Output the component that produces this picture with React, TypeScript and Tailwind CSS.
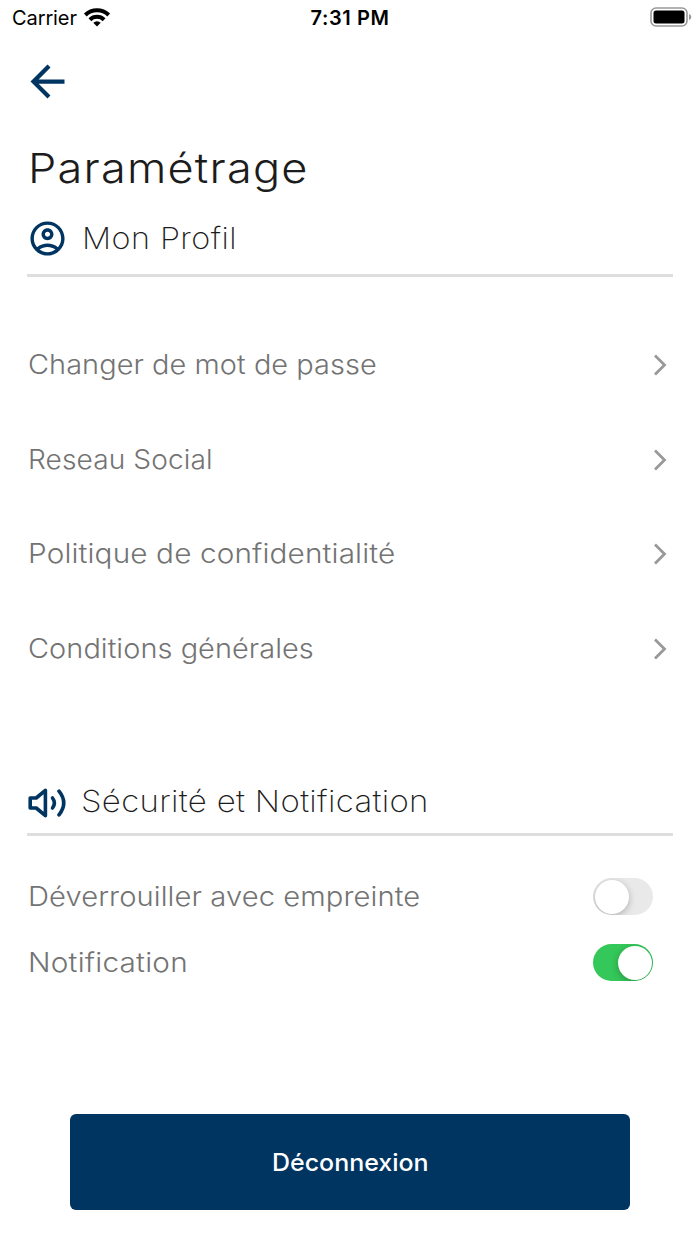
import { useState } from 'react';
import { MdArrowBack, MdOutlineAccountCircle } from 'react-icons/md';

const links = [
  { label: 'Changer de mot de passe', stretch: 'scale-x-[1.07] tracking-[0.06px]' },
  { label: 'Reseau Social', stretch: 'scale-x-[1.04] tracking-[0.1px]' },
  { label: 'Politique de confidentialité', stretch: 'scale-x-[1.1] tracking-[0.13px]' },
  { label: 'Conditions générales', stretch: 'scale-x-[1.07] tracking-[0.07px]' },
];

function StatusBar() {
  return (
    <header className="grid h-9 grid-cols-[1fr_auto_1fr] items-center px-2 text-black">
      <div className="flex items-center gap-[6px] pl-1">
        <span className="text-[20px] leading-9 tracking-[-0.1px]">Carrier</span>
        <svg className="-mt-0.5 h-[20px] w-[28px]" viewBox="0 0 28 20" fill="none" stroke="currentColor" strokeWidth="4">
          <path d="M2.300 8a16.800 16.800 0 0 1 23.400 0" />
          <path d="M6.900 12.700a10.200 10.200 0 0 1 14.200 0" />
          <path d="M14 19.500l-3.700-3.700a5.300 5.300 0 0 1 7.400 0z" fill="currentColor" stroke="none" />
        </svg>
      </div>
      <span className="text-center text-[20px] leading-9 font-semibold tracking-[0.6px]">7:31 PM</span>
      <svg className="-mt-0.5 h-5 w-[42px] justify-self-end" viewBox="0 0 42 20">
        <rect x="1" y="1" width="36" height="18" rx="5" fill="none" stroke="#999" strokeWidth="1.6" />
        <rect x="3.5" y="3.5" width="31" height="13" rx="2.5" fill="#000" />
        <path d="M39 7c3 .8 3 5.200 0 6z" fill="#999" />
      </svg>
    </header>
  );
}

function VolumeIcon() {
  return (
    <svg className="h-8 w-10" viewBox="0 0 40 32" fill="none" stroke="#003562" strokeWidth="3.6" strokeLinecap="round" strokeLinejoin="round">
      <path d="M3.200 11h6l9.200-7.700v25.400L9.200 21h-6z" />
      <path d="M25.500 11q3.800 5 0 10" />
      <path d="M32 4.200q9.500 11.800 0 23.600" />
    </svg>
  );
}

function Toggle({ label, defaultOn }: { label: string; defaultOn: boolean }) {
  const [on, setOn] = useState(defaultOn);

  return (
    <button
      type="button"
      role="switch"
      aria-checked={on}
      aria-label={label}
      onClick={() => setOn(!on)}
      className={`flex h-[37px] w-[60px] cursor-pointer items-center overflow-hidden rounded-full p-[1.500px] ${on ? 'justify-end bg-[#34c759]' : 'justify-start bg-[#e9e9e9]'}`}
    >
      <span className="size-[34px] rounded-full bg-white shadow-[0_2px_7px_rgba(0,0,0,0.25)]" />
    </button>
  );
}

function App() {
  return (
    <div className="flex h-[1244px] w-[700px] flex-col bg-white font-['Inter',sans-serif]">
      <StatusBar />

      <main className="flex flex-1 flex-col px-[27px]">
        <button type="button" aria-label="Retour" className="mt-5 -ml-[5px] w-fit cursor-pointer text-[#003562]">
          <MdArrowBack size={51} />
        </button>

        <h1 className="mt-[31px] ml-px w-fit origin-left scale-x-[1.1] text-[41px] leading-[60px] font-light tracking-[1.1px] text-[#1c1c1c]">Paramétrage</h1>

        <div className="mt-[15px] flex h-[64px] items-center gap-[14px] border-b-3 border-[#dedede] pb-[11px]">
          <MdOutlineAccountCircle size={41} className="text-[#003562]" />
          <h2 className="origin-left scale-x-[1.08] text-[30px] leading-10 font-extralight tracking-[0.4px] text-[#1c1c1c]">Mon Profil</h2>
        </div>

        <nav className="mt-[41px] flex flex-col">
          {links.map((link) => (
            <a key={link.label} href="#" className="flex h-[94.600px] items-center justify-between pr-[5px] pl-[0.500px] text-[#737373]">
              <span className={`origin-left text-[27px] leading-9 font-light ${link.stretch}`}>{link.label}</span>
              <svg className="h-6 w-4" viewBox="0 0 16 24" fill="none" stroke="#999" strokeWidth="2.800">
                <path d="M3 2.500l9.500 9.500L3 21.500" />
              </svg>
            </a>
          ))}
        </nav>

        <div className="mt-[79.500px] flex h-[60px] items-center gap-[14px] border-b-3 border-[#dedede] pb-[2px]">
          <VolumeIcon />
          <h2 className="-mt-1 origin-left scale-x-[1.1] text-[30px] leading-10 font-extralight tracking-[0.3px] text-[#1c1c1c]">Sécurité et Notification</h2>
        </div>

        <div className="mt-[28px] flex flex-col pr-[20px] pl-[0.500px] text-[27px] font-light text-[#737373]">
          <div className="flex h-[66px] items-center justify-between">
            <span className="origin-left scale-x-[1.08] tracking-[0.08px]">Déverrouiller avec empreinte</span>
            <Toggle label="Déverrouiller avec empreinte" defaultOn={false} />
          </div>
          <div className="flex h-[66px] items-center justify-between">
            <span className="origin-left scale-x-[1.1] tracking-[0.2px]">Notification</span>
            <Toggle label="Notification" defaultOn />
          </div>
        </div>

        <button type="button" className="mx-auto mt-auto mb-[34px] h-[96px] w-[560px] cursor-pointer rounded-md bg-[#003562] pt-0.5 text-[24px] font-medium text-white">
          <span className="inline-block scale-x-[1.04]">Déconnexion</span>
        </button>
      </main>
    </div>
  );
}

export default App;
